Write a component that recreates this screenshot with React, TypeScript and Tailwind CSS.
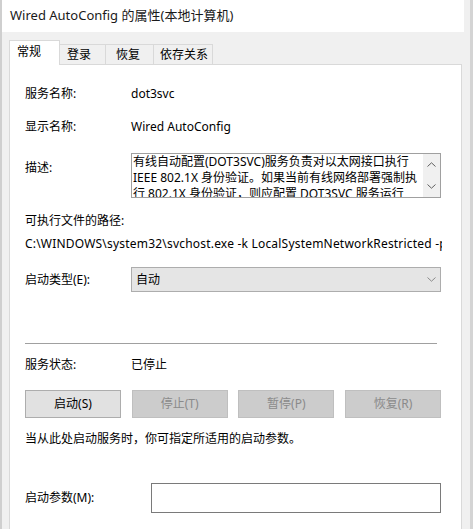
import React from "react";

const font = { fontFamily: '"Noto Sans", "Noto Sans CJK SC", sans-serif' };

function ChevronUp() {
  return (
    <svg width="9" height="5" viewBox="0 0 9 5" fill="none">
      <path d="M0.5 4.5 L4.5 0.8 L8.5 4.5" stroke="#606060" strokeWidth="1" />
    </svg>
  );
}
function ChevronDown({ color = "#606060" }: { color?: string }) {
  return (
    <svg width="9" height="5" viewBox="0 0 9 5" fill="none">
      <path d="M0.5 0.5 L4.5 4.2 L8.5 0.5" stroke={color} strokeWidth="1" />
    </svg>
  );
}

function Btn({ label, enabled }: { label: string; enabled?: boolean }) {
  return (
    <div
      className={
        "h-[28px] w-[96px] flex items-center justify-center border text-[12px] " +
        (enabled
          ? "bg-[#e1e1e1] border-[#adadad] text-black"
          : "bg-[#cccccc] border-[#bfbfbf] text-[#8a8a8a]")
      }
    >
      {label}
    </div>
  );
}

export default function App() {
  return (
    <div
      className="w-[473px] h-[529px] bg-[#f0f0f0] flex overflow-hidden text-[12px] text-black"
      style={font}
    >
      <div className="w-[2px] bg-[#cfcfcf] shrink-0" />
      <div className="flex-1 flex flex-col min-w-0">
        <div className="h-[32px] bg-white flex items-center pl-[8px] text-[13px] text-[#1a1a1a] shrink-0">
          Wired AutoConfig 的属性(本地计算机)
        </div>
        <div className="h-[32px] flex items-end pl-[7px] shrink-0">
          <div className="relative z-10 -mb-px h-[25px] w-[51px] bg-white border border-[#d9d9d9] border-b-0 pl-[7px] pt-[3px] leading-[16px]">
            常规
          </div>
          <div className="h-[20px] w-[46px] bg-[#f0f0f0] border border-[#d9d9d9] border-b-0 border-l-0 pl-[7px] pt-[2px] leading-[16px]">
            登录
          </div>
          <div className="h-[20px] w-[48px] bg-[#f0f0f0] border border-[#d9d9d9] border-b-0 border-l-0 pl-[10px] pt-[2px] leading-[16px]">
            恢复
          </div>
          <div className="h-[20px] w-[59px] bg-[#f0f0f0] border border-[#d9d9d9] border-b-0 border-l-0 pl-[6px] pt-[2px] leading-[16px]">
            依存关系
          </div>
        </div>
        <div className="ml-[7px] w-[453px] flex-1 bg-white border border-[#d9d9d9] border-b-0 pl-[15px] flex flex-col">
          <div className="mt-[19px] h-[20px] flex items-center">
            <div className="w-[106px]">服务名称:</div>
            <div>dot3svc</div>
          </div>
          <div className="mt-[13px] h-[20px] flex items-center">
            <div className="w-[106px]">显示名称:</div>
            <div>Wired AutoConfig</div>
          </div>
          <div className="mt-[16px] flex items-start">
            <div className="w-[106px] mt-[5px] h-[20px] flex items-center">描述:</div>
            <div className="w-[310px] h-[45px] border border-[#a0a0a0] flex overflow-hidden">
              <div className="flex-1 pl-[1px] leading-[16px] overflow-hidden whitespace-nowrap">
                <div>有线自动配置(DOT3SVC)服务负责对以太网接口执行</div>
                <div>IEEE 802.1X 身份验证。如果当前有线网络部署强制执</div>
                <div>行 802.1X 身份验证，则应配置 DOT3SVC 服务运行</div>
              </div>
              <div className="w-[17px] bg-[#f0f0f0] flex flex-col items-center justify-between pt-[8px] pb-[8px]">
                <ChevronUp />
                <ChevronDown />
              </div>
            </div>
          </div>
          <div className="mt-[13px] h-[20px] flex items-center">可执行文件的路径:</div>
          <div className="mt-[3px] h-[20px] flex items-center whitespace-nowrap overflow-hidden w-[417px] tracking-[0.2px]">
            C:\WINDOWS\system32\svchost.exe -k LocalSystemNetworkRestricted -p
          </div>
          <div className="mt-[13px] flex items-center">
            <div className="w-[106px]">启动类型(E):</div>
            <div className="w-[310px] h-[25px] bg-[#e5e5e5] border border-[#adadad] flex items-center justify-between pl-[4px] pr-[4px]">
              <span>自动</span>
              <ChevronDown color="#8a8a8a" />
            </div>
          </div>
          <div className="mt-[51px] h-px w-[412px] bg-[#a0a0a0]" />
          <div className="mt-[11px] h-[20px] flex items-center">
            <div className="w-[106px]">服务状态:</div>
            <div>已停止</div>
          </div>
          <div className="mt-[15px] flex w-[416px] justify-between">
            <Btn label="启动(S)" enabled />
            <Btn label="停止(T)" />
            <Btn label="暂停(P)" />
            <Btn label="恢复(R)" />
          </div>
          <div className="mt-[11px] h-[20px] flex items-center">
            当从此处启动服务时，你可指定所适用的启动参数。
          </div>
          <div className="mt-[34px] flex items-center">
            <div className="w-[126px]">启动参数(M):</div>
            <div className="w-[290px] h-[30px] border border-[#7a7a7a] bg-white" />
          </div>
        </div>
      </div>
      <div className="w-[9px] shrink-0 flex">
        <div className="w-[6px] bg-[#f0f0f0]" />
        <div className="w-[3px] bg-[#d4d4d4]" />
      </div>
    </div>
  );
}
